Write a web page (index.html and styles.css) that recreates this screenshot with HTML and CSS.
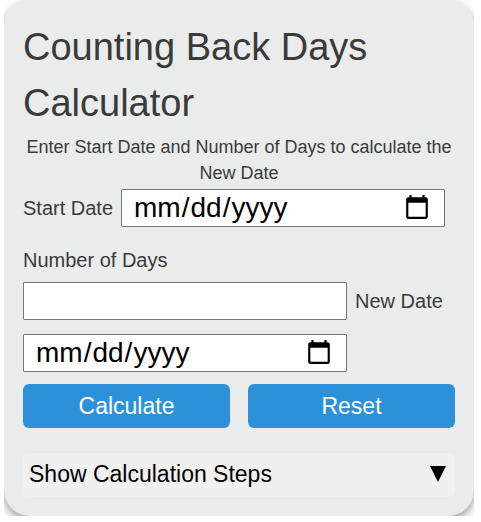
FILE: index.html
```html
<!DOCTYPE html>
<html lang="en-US">

<head>
    <meta charset="UTF-8">
    <meta name="viewport" content="width=device-width, initial-scale=1.0">
    <title>Counting Back Days Calculator</title>
    <link rel="stylesheet" href="styles.css">
</head>

<body>
    <div class="wrapper">
        <div class="calculator">
            <h2>Counting Back Days Calculator</h2>
            <p class="description">Enter Start Date and Number of Days to calculate the New Date</p>

            <form id="calculator-form">
                <div class="fields">
                    <label for="start-date">Start Date</label>
                    <input type="date" id="start-date">
                    <label for="number-of-days">Number of Days</label>
                    <input type="text" id="number-of-days" inputmode="numeric">
                    <label for="new-date">New Date</label>
                    <input type="date" id="new-date">
                </div>
                <div class="buttons">
                    <button type="submit" class="btn">Calculate</button>
                    <button type="reset" class="btn">Reset</button>
                </div>
            </form>

            <button type="button" class="accordion" id="steps-btn">
                <span>Show Calculation Steps</span>
                <svg class="arrow" viewBox="0 0 16 16" aria-hidden="true"><path d="M0 0h16L8 16z"/></svg>
            </button>
            <div class="panel" id="steps"></div>
        </div>
    </div>

    <script>
        const startDate = document.getElementById('start-date');
        const numberOfDays = document.getElementById('number-of-days');
        const newDate = document.getElementById('new-date');
        const steps = document.getElementById('steps');

        document.getElementById('calculator-form').addEventListener('submit', function(event) {
            event.preventDefault();

            const days = parseInt(numberOfDays.value, 10);
            if (!startDate.value || isNaN(days)) {
                return;
            }

            const date = new Date(startDate.value);
            date.setUTCDate(date.getUTCDate() - days);
            newDate.value = date.toISOString().slice(0, 10);
            steps.textContent = `${startDate.value} - ${days} days = ${newDate.value}`;
        });

        document.getElementById('calculator-form').addEventListener('reset', function() {
            steps.textContent = '';
        });

        document.getElementById('steps-btn').addEventListener('click', function() {
            steps.classList.toggle('open');
        });
    </script>
</body>

</html>
```

FILE: styles.css
```css
* {
    box-sizing: border-box;
}

body {
    margin: 0;
    background-color: white;
    font-family: "Liberation Sans", Arial, sans-serif;
    color: #3a3a3a;
}

.wrapper {
    margin: 0 7px 0 4px;
    overflow: hidden;
}

.calculator {
    padding: 19px;
    background-color: #eaeceb;
    border-radius: 26px;
    box-shadow: 0 4px 10px rgba(0, 0, 0, 0.4);
}

h2 {
    margin: 0;
    font-size: 38px;
    font-weight: normal;
    line-height: 56px;
}

.description {
    margin: 3px 0;
    font-size: 18px;
    line-height: 26px;
    text-align: center;
}

.fields {
    display: flex;
    flex-wrap: wrap;
    align-items: flex-start;
    gap: 2px 8px;
}

.fields label {
    font-size: 20px;
    line-height: 39px;
}

.fields input {
    width: 75%;
    height: 38px;
    margin: 0 0 12px;
    padding: 0 11px;
    border: 1px solid #767676;
    border-radius: 1px;
    background-color: white;
    color: black;
    font-family: inherit;
    font-size: 28px;
}

.buttons {
    display: flex;
    gap: 18px;
    margin-bottom: 25px;
}

.btn {
    flex: 1;
    height: 44px;
    border: none;
    border-radius: 6px;
    background-color: #2d91d9;
    color: white;
    font-family: inherit;
    font-size: 23px;
    cursor: pointer;
}

.btn:hover {
    background-color: #2279b8;
}

.accordion {
    display: flex;
    justify-content: space-between;
    align-items: center;
    width: 100%;
    height: 44px;
    padding: 0 9px 2px 6px;
    border: none;
    border-radius: 6px;
    background-color: #f0f0f0;
    color: black;
    font-family: inherit;
    font-size: 23px;
    cursor: pointer;
}

.arrow {
    width: 16px;
    height: 16px;
}

.panel {
    display: none;
    padding: 12px 6px 0;
    font-size: 18px;
}

.panel.open {
    display: block;
}
```
